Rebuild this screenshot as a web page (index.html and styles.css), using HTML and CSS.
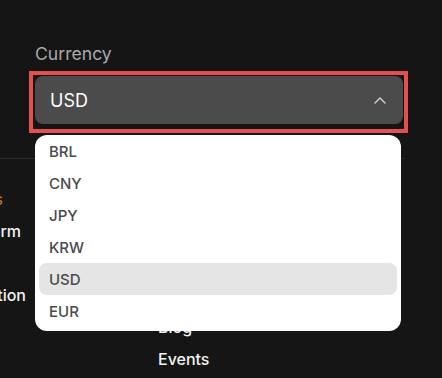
FILE: index.html
```html
<!DOCTYPE html>
<html lang="en">
<head>
<meta charset="utf-8">
<title>Currency</title>
<link rel="stylesheet" href="styles.css">
</head>
<body>
<div class="page">
  <section class="settings">
    <label class="label">Currency</label>
    <div class="highlight">
      <div class="select">
        <span class="select-value">USD</span>
        <svg class="chevron" width="12" height="7" viewBox="0 0 12 7"><polyline points="1,6 6,1 11,6" fill="none" stroke="#d4d4d4" stroke-width="1.4" stroke-linecap="round" stroke-linejoin="round"/></svg>
      </div>
    </div>
  </section>

  <footer class="footer">
    <ul class="col col-clipped">
      <li class="heading end-3">Resources</li>
      <li class="end-21">Platform</li>
      <li class="end-hidden">Docs</li>
      <li>Documentation</li>
    </ul>
    <ul class="col col-mid">
      <li class="heading">Company</li>
      <li>About</li>
      <li>Careers</li>
      <li>Press</li>
      <li>Blog</li>
      <li>Events</li>
    </ul>
  </footer>

  <ul class="menu">
    <li class="option">BRL</li>
    <li class="option">CNY</li>
    <li class="option">JPY</li>
    <li class="option">KRW</li>
    <li class="option selected">USD</li>
    <li class="option">EUR</li>
  </ul>
</div>
</body>
</html>
```

FILE: styles.css
```css
* { box-sizing: border-box; }

html, body {
  margin: 0;
  padding: 0;
  background: #151515;
  width: 442px;
  height: 378px;
  overflow: hidden;
  font-family: Inter, "Noto Sans", sans-serif;
}

.page {
  position: relative;
  width: 442px;
  height: 378px;
}

.settings {
  width: 404px;
  padding-top: 44px;
  padding-bottom: 25px;
  border-bottom: 1px solid #2a2a2a;
  display: flex;
  flex-direction: column;
}

.label {
  margin-left: 35px;
  font-size: 17.6px;
  line-height: 20px;
  color: #a9a9a9;
}

.highlight {
  margin-top: 7px;
  margin-left: 29px;
  width: 379px;
  border: 4px solid #e5504f;
  padding: 1px 1px 5px 2px;
}

.select {
  width: 368px;
  height: 48px;
  border-radius: 8px;
  background: #4b4b4b;
  display: flex;
  align-items: center;
  justify-content: space-between;
  padding: 0 17px 0 15px;
}

.select-value {
  font-size: 18px;
  color: #ffffff;
  font-weight: 400;
}

.chevron { display: block; }

.footer {
  display: flex;
  padding-top: 24px;
}

.col {
  list-style: none;
  margin: 0;
  padding: 0;
  font-size: 16px;
  line-height: 32px;
  font-weight: 500;
  color: #f2f2f2;
}

.col li { white-space: nowrap; }

.heading { color: #c27a2f; font-weight: 400; }

.col-clipped {
  width: 26px;
  overflow: hidden;
  display: flex;
  flex-direction: column;
  align-items: flex-end;
}

.col-clipped li {
  display: flex;
  justify-content: flex-end;
}

.end-3 { padding-right: 23px; }
.end-21 { padding-right: 5px; }
.end-hidden { padding-right: 60px; }

.col-mid {
  margin-left: 132px;
}

.menu {
  position: absolute;
  left: 35px;
  top: 135px;
  width: 366px;
  margin: 0;
  list-style: none;
  padding: 0 4px 4px;
  background: #ffffff;
  border-radius: 12px;
}

.option {
  height: 32px;
  padding: 6px 10px 4px;
  font-size: 15px;
  line-height: 22px;
  font-weight: 500;
  color: #4a4a4a;
  border-radius: 8px;
}

.option.selected {
  background: #e5e5e5;
}
```
